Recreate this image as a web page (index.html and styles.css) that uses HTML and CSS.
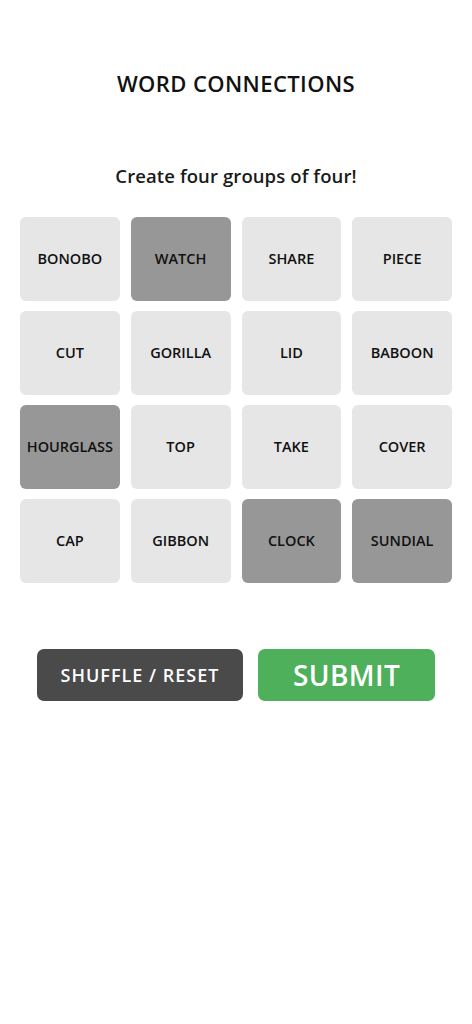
FILE: index.html
```html
<!DOCTYPE html>
<html lang="en">
<head>
<meta charset="utf-8">
<title>Word Connections</title>
<link rel="stylesheet" href="styles.css">
</head>
<body>
<main class="game">
  <h1 class="title">WORD CONNECTIONS</h1>
  <p class="subtitle">Create four groups of four!</p>
  <div class="grid">
    <div class="tile">BONOBO</div>
    <div class="tile selected">WATCH</div>
    <div class="tile">SHARE</div>
    <div class="tile">PIECE</div>
    <div class="tile">CUT</div>
    <div class="tile">GORILLA</div>
    <div class="tile">LID</div>
    <div class="tile">BABOON</div>
    <div class="tile selected">HOURGLASS</div>
    <div class="tile">TOP</div>
    <div class="tile">TAKE</div>
    <div class="tile">COVER</div>
    <div class="tile">CAP</div>
    <div class="tile">GIBBON</div>
    <div class="tile selected">CLOCK</div>
    <div class="tile selected">SUNDIAL</div>
  </div>
  <div class="actions">
    <button class="btn btn-shuffle">SHUFFLE / RESET</button>
    <button class="btn btn-submit">SUBMIT</button>
  </div>
</main>
</body>
</html>
```
FILE: styles.css
```css
* { box-sizing: border-box; }
html, body { margin: 0; padding: 0; background: #ffffff; }
body {
  font-family: "Open Sans", "DejaVu Sans", sans-serif;
  color: #111111;
}
.game {
  width: 432px;
  margin: 0 0 0 20px;
  display: flex;
  flex-direction: column;
  align-items: center;
}
.title {
  margin: 70px 0 0;
  font-size: 22px;
  font-weight: 600;
  line-height: 26px;
  letter-spacing: 0.4px;
}
.subtitle {
  margin: 67px 0 0;
  font-size: 18.5px;
  font-weight: 600;
  line-height: 26px;
  letter-spacing: 0.1px;
  color: #1a1a1a;
}
.grid {
  margin-top: 28px;
  width: 100%;
  display: grid;
  grid-template-columns: repeat(4, 1fr);
  column-gap: 11px;
  row-gap: 10px;
}
.tile {
  height: 84px;
  border-radius: 6px;
  background: #e6e6e6;
  display: flex;
  align-items: center;
  justify-content: center;
  padding-bottom: 2px;
  font-size: 14.5px;
  font-weight: 600;
  color: #111111;
}
.tile.selected { background: #979797; }
.actions {
  margin-top: 66px;
  display: flex;
  gap: 15px;
}
.btn {
  height: 52px;
  border: none;
  border-radius: 7px;
  color: #ffffff;
  font-family: inherit;
  display: flex;
  align-items: center;
  justify-content: center;
  padding: 0;
}
.btn-shuffle {
  width: 206px;
  background: #4a4a4a;
  font-size: 18px;
  font-weight: 600;
  letter-spacing: 1px;
}
.btn-submit {
  width: 177px;
  background: #4eb05a;
  font-size: 28px;
  font-weight: 600;
  letter-spacing: 0.4px;
}
```
